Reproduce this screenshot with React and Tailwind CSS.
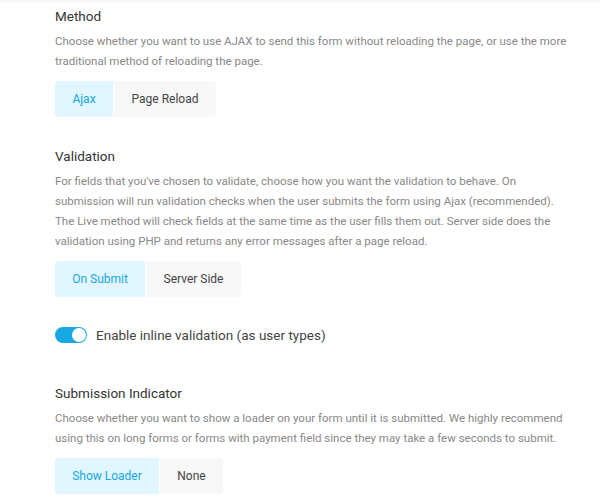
import { useState } from 'react';

const Segmented = ({ options, value, onChange }) => (
    <div className="mt-[10px] flex gap-px">
        {options.map((opt, idx) => {
            const active = opt.label === value;
            return (
                <button
                    key={opt.label}
                    onClick={() => onChange(opt.label)}
                    className={`h-9 text-[12px] ${opt.w} ${idx === 0 ? 'rounded-l' : ''} ${
                        idx === options.length - 1 ? 'rounded-r' : ''
                    } ${active ? 'bg-[#e1f6ff] text-[#17a8e3]' : 'bg-[#f8f8f8] text-[#444]'}`}
                >
                    {opt.label}
                </button>
            );
        })}
    </div>
);

const Heading = ({ children }) => (
    <h3 className="text-[13.5px] leading-[22px] text-[#333]">{children}</h3>
);

// lines are broken by hand so they wrap where the reference does
const Desc = ({ lines }) => (
    <p className="mt-[4px] whitespace-nowrap text-[11.5px] leading-5 text-[#888]">
        {lines.map((line, i) => (
            <span key={i} className="block">
                {line}
            </span>
        ))}
    </p>
);

export default function App() {
    const [method, setMethod] = useState('Ajax');
    const [validation, setValidation] = useState('On Submit');
    const [indicator, setIndicator] = useState('Show Loader');
    const [inline, setInline] = useState(true);

    return (
        <div
            className="min-h-[499px] bg-white border-t-[3px] border-[#f8f8f8] pl-[55px] pt-[2px]"
            style={{ fontFamily: 'Roboto, "Noto Sans", sans-serif' }}
        >
            {/* Method */}
            <section>
                <Heading>Method</Heading>
                <Desc
                    lines={[
                        'Choose whether you want to use AJAX to send this form without reloading the page, or use the more',
                        'traditional method of reloading the page.'
                    ]}
                />
                <Segmented
                    value={method}
                    onChange={setMethod}
                    options={[
                        { label: 'Ajax', w: 'w-[58px]' },
                        { label: 'Page Reload', w: 'w-[102px]' }
                    ]}
                />
            </section>

            {/* Validation */}
            <section className="mt-[28px]">
                <Heading>Validation</Heading>
                <Desc
                    lines={[
                        "For fields that you've chosen to validate, choose how you want the validation to behave. On",
                        'submission will run validation checks when the user submits the form using Ajax (recommended).',
                        'The Live method will check fields at the same time as the user fills them out. Server side does the',
                        'validation using PHP and returns any error messages after a page reload.'
                    ]}
                />
                <Segmented
                    value={validation}
                    onChange={setValidation}
                    options={[
                        { label: 'On Submit', w: 'w-[90px]' },
                        { label: 'Server Side', w: 'w-[95px]' }
                    ]}
                />
                <label className="mt-[27px] flex items-center gap-[9px] cursor-pointer">
                    <button
                        onClick={() => setInline(!inline)}
                        className={`relative h-4 w-8 rounded-full ${inline ? 'bg-[#17a8e3]' : 'bg-[#e6e6e6]'}`}
                    >
                        <span
                            className={`absolute top-[1px] h-[14px] w-[14px] rounded-full bg-white ${
                                inline ? 'right-[1px]' : 'left-[1px]'
                            }`}
                        ></span>
                    </button>
                    <span className="text-[13.5px] leading-[22px] text-[#444]">
                        Enable inline validation (as user types)
                    </span>
                </label>
            </section>

            {/* Submission Indicator */}
            <section className="mt-[36px]">
                <Heading>Submission Indicator</Heading>
                <Desc
                    lines={[
                        'Choose whether you want to show a loader on your form until it is submitted. We highly recommend',
                        'using this on long forms or forms with payment field since they may take a few seconds to submit.'
                    ]}
                />
                <Segmented
                    value={indicator}
                    onChange={setIndicator}
                    options={[
                        { label: 'Show Loader', w: 'w-[104px]' },
                        { label: 'None', w: 'w-[63px]' }
                    ]}
                />
            </section>
        </div>
    );
}
